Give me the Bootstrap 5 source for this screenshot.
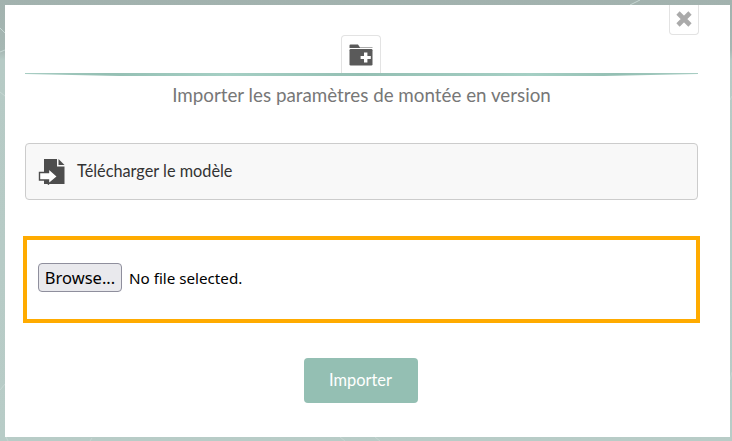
<!DOCTYPE html>
<html lang="fr">
<head>
  <meta charset="UTF-8">
  <title>Importer</title>
  <link href="https://cdn.jsdelivr.net/npm/bootstrap@5.3.0/dist/css/bootstrap.min.css" rel="stylesheet">
  <style>
    html, body { height: 100%; }
    body {
      background: linear-gradient(#a2b2ae 0, #a6b7b3 50px, #b6cac5 60px, #b8ccc7 100%);
      font-family: Lato, "Liberation Sans", sans-serif;
      overflow: hidden;
    }
    .fond-lignes { position: absolute; inset: 0; width: 100%; height: 100%; }
    .fenetre {
      position: relative;
      width: 725px;
      height: 432px;
      margin: 5px 0 0 5px;
      padding: 30px 32px 0 20px;
      background: #fff;
    }
    .btn-fermer {
      position: absolute;
      top: 0;
      right: 31px;
      width: 30px;
      height: 30px;
      padding: 0 0 1px;
      background: #fff;
      border: 1px solid #e3e3e3;
      border-top: 0;
      border-radius: 0 0 4px 4px;
    }
    .boite-icone {
      width: 40px;
      height: 40px;
      background: #fff;
      border: 1px solid #e3e3e3;
      border-bottom: 0;
      border-radius: 4px 4px 0 0;
      margin-left: 316px;
      padding-top: 8px;
    }
    .separateur {
      height: 3px;
      margin-top: -2px;
      position: relative;
      background: linear-gradient(90deg, #a8cdc3 0, #94bfb3 12%, #a5cfc4 30%, #94bfb3 50%, #a5cfc4 75%, #94bfb3 88%, #a8cdc3 100%);
      clip-path: polygon(0 0, 100% 0, 100% 33%, 86% 100%, 14% 100%, 0 33%);
    }
    .titre {
      margin: 7px 0 0;
      height: 33px;
      font-size: 18.8px;
      line-height: 24px;
      color: #777;
      text-align: center;
    }
    .bloc-modele {
      height: 57px;
      margin-top: 27px;
      padding-left: 12px;
      background: #f8f8f8;
      border: 1px solid #ccc;
      border-radius: 4px;
      color: #333;
      font-size: 16.3px;
    }
    .bloc-fichier {
      height: 87px;
      margin: 36px -2px 0;
      padding: 0 0 4px 11px;
      border: 4px solid #ffab00;
      font-family: "Noto Sans", "Open Sans", sans-serif;
      font-size: 15.2px;
      color: #000;
    }
    .libelle-fichier { padding-top: 2px; }
    .btn-parcourir {
      width: 84px;
      height: 29px;
      padding: 0;
      margin-right: 7px;
      font-size: 16.5px;
      line-height: 26px;
      color: #000;
      background: #e9e9ed;
      border: 1px solid #8f8f9d;
      border-radius: 4px;
    }
    .btn-importer {
      width: 114px;
      height: 45px;
      padding: 0;
      font-size: 16.4px;
      color: #fff;
      background: #94bfb3;
      border: 0;
      border-radius: 4px;
    }
    .zone-importer { margin-top: 35px; padding-right: 2px; }
  </style>
</head>
<body class="m-0">
  <svg class="fond-lignes" viewBox="0 0 732 441" fill="none" stroke="#c6d6d2" stroke-width="1">
    <path d="M0 28 L5 33 M0 52 L5 50 M0 92 L5 96 M0 390 L5 384 M8 441 L6 437 M90 441 L92 438 M345 441 L340 437 M380 441 L375 437 M630 5 L640 0 M730 100 L732 96 M730 380 L732 372"/>
  </svg>

  <div class="fenetre">
    <button type="button" class="btn-fermer d-flex align-items-center justify-content-center" aria-label="Fermer">
      <svg width="18" height="18" viewBox="0 0 18 18"><path d="M3 3 15 15M15 3 3 15" stroke="#aaa" stroke-width="4.6"/></svg>
    </button>

    <div class="boite-icone d-flex justify-content-center align-items-start">
      <svg width="24" height="22" viewBox="0 0 24 22">
        <path d="M0.5 4V1.5Q0.5 0.5 1.5 0.5H9L11 3.5H23.5V4Z" fill="#5a5a5a"/>
        <rect x="0.5" y="5" width="23" height="16.5" rx="1.2" fill="#5a5a5a"/>
        <path d="M15 8.5h3.4v3.4h3.4v3.2h-3.4v3.4H15v-3.4h-3.4v-3.2H15z" fill="#fff"/>
      </svg>
    </div>
    <div class="separateur"></div>
    <p class="titre">Importer les paramètres de montée en version</p>

    <div class="bloc-modele d-flex align-items-center gap-2">
      <svg width="27" height="26" viewBox="0 0 27 26">
        <path d="M6 0H19V7.5H26.5V25H6Z" fill="#4d4d4d"/>
        <path d="M20.5 0 26.5 6H20.5Z" fill="#4d4d4d"/>
        <path d="M1.5 13.5H10.5V9.5L19.5 17.5 10.5 25V21H1.5Z" fill="#fff" stroke="#4d4d4d" stroke-width="1.4"/>
      </svg>
      <span class="ms-1">Télécharger le modèle</span>
    </div>

    <div class="bloc-fichier d-flex align-items-center">
      <button type="button" class="btn-parcourir">Browse...</button>
      <span class="libelle-fichier">No file selected.</span>
    </div>

    <div class="zone-importer text-center">
      <button type="button" class="btn-importer">Importer</button>
    </div>
  </div>
</body>
</html>
